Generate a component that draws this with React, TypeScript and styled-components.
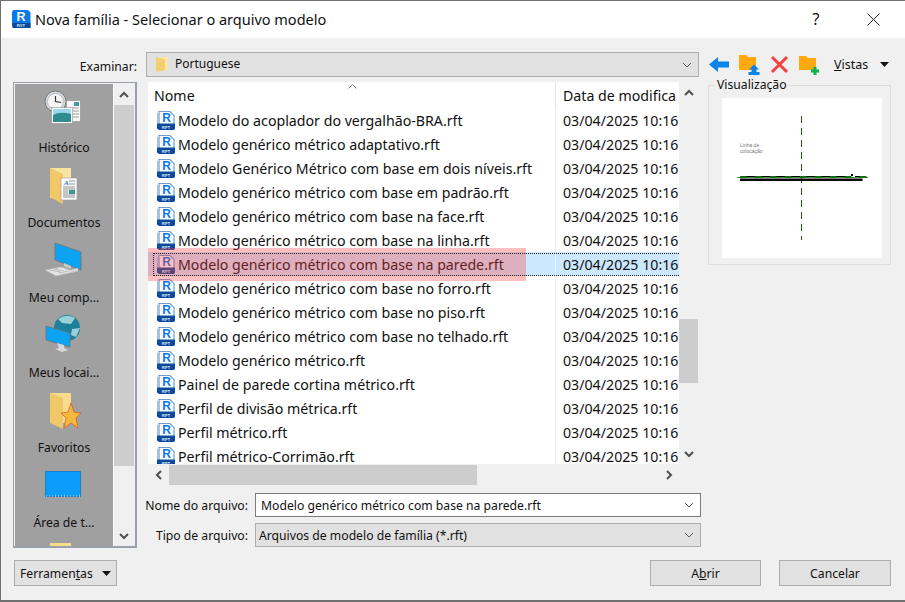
import React from "react"
import styled, { createGlobalStyle } from "styled-components"

const GlobalStyle = createGlobalStyle`
    html, body {
        margin: 0;
        padding: 0;
        background: #f0f0f0;
    }
    * {
        box-sizing: border-box;
    }
`

const files = [
    "Modelo do acoplador do vergalhão-BRA.rft",
    "Modelo genérico métrico adaptativo.rft",
    "Modelo Genérico Métrico com base em dois níveis.rft",
    "Modelo genérico métrico com base em padrão.rft",
    "Modelo genérico métrico com base na face.rft",
    "Modelo genérico métrico com base na linha.rft",
    "Modelo genérico métrico com base na parede.rft",
    "Modelo genérico métrico com base no forro.rft",
    "Modelo genérico métrico com base no piso.rft",
    "Modelo genérico métrico com base no telhado.rft",
    "Modelo genérico métrico.rft",
    "Painel de parede cortina métrico.rft",
    "Perfil de divisão métrica.rft",
    "Perfil métrico.rft",
    "Perfil métrico-Corrimão.rft"
]

const SELECTED = 6

const Window = styled.div`
    width: 905px;
    height: 602px;
    display: flex;
    flex-direction: column;
    overflow: hidden;
    background: #f0f0f0;
    border: 1px solid #707070;
    border-bottom: 2px solid #707070;
    border-right: 0;
    font-family: "Noto Sans", "Open Sans", sans-serif;
    color: #111;
`

const TitleBar = styled.div`
    height: 37px;
    flex: none;
    background: #fff;
    display: flex;
    align-items: center;
    padding-left: 10px;
    padding-bottom: 1px;
    font-size: 14.5px;
`

const TitleText = styled.span`
    margin-left: 4px;
    flex: 1;
`

const HelpMark = styled.span`
    font-size: 16px;
    width: 20px;
    text-align: center;
    margin-right: 41px;
`

const CloseMark = styled.svg`
    width: 13px;
    height: 13px;
    margin-right: 25px;
`

const Content = styled.div`
    flex: 1;
    display: flex;
    flex-direction: column;
    padding: 14px 0 0 12px;
`

const Columns = styled.div`
    display: flex;
`

const MainColumn = styled.div`
    width: 688px;
    flex: none;
`

const TopRow = styled.div`
    display: flex;
    height: 25px;
`

const LookLabel = styled.div`
    width: 124px;
    text-align: right;
    font-size: 12.2px;
    padding-top: 6px;
`

const PathCombo = styled.div`
    width: 553px;
    height: 25px;
    margin-left: 9px;
    background: #e1e1e1;
    border: 1px solid #adadad;
    display: flex;
    align-items: center;
    padding: 0 6px 0 8px;
    font-size: 12px;
`

const PathText = styled.span`
    margin-left: 6px;
    flex: 1;
    padding-bottom: 3px;
`

const Middle = styled.div`
    display: flex;
    margin-top: 5px;
`

const Sidebar = styled.div`
    width: 124px;
    height: 466px;
    flex: none;
    display: flex;
    background: #f0f0f0;
    border-style: solid;
    border-width: 1px 2px 2px 1px;
    border-color: #9aa0a8;
    padding: 1px 0 0 1px;
`

const Places = styled.div`
    width: 99px;
    background: #a0a0a0;
    overflow: hidden;
    display: flex;
    flex-direction: column;
    border-right: 1px solid #fff;
    padding-top: 3px;
`

const Place = styled.div`
    height: 75px;
    flex: none;
    display: flex;
    flex-direction: column;
    align-items: center;
    font-size: 12.2px;
`

const PlaceIcon = styled.svg`
    width: 40px;
    height: 40px;
    margin-bottom: 12px;
    flex: none;
    overflow: visible;
`

const SideScroll = styled.div`
    width: 20px;
    display: flex;
    flex-direction: column;
    align-items: center;
`

const ArrowBox = styled.div`
    height: 21px;
    width: 100%;
    flex: none;
    display: flex;
    align-items: center;
    justify-content: center;
`

const SideThumb = styled.div`
    width: 100%;
    height: 361px;
    background: #cdcdcd;
`

const SideTrack = styled.div`
    flex: 1;
`

const RightColumn = styled.div`
    flex: 1;
    display: flex;
    flex-direction: column;
`

const FileArea = styled.div`
    width: 550px;
    height: 402px;
    margin-left: 11px;
    display: grid;
    grid-template-columns: 531px 19px;
    grid-template-rows: 382px 20px;
`

const ListPanel = styled.div`
    position: relative;
    background: #fff;
    overflow: hidden;
`

const HeaderRow = styled.div`
    height: 26px;
    display: flex;
    font-size: 14.2px;
    align-items: flex-end;
`

const NameHead = styled.div`
    width: 408px;
    padding-left: 6px;
    height: 26px;
    line-height: 27px;
    border-right: 1px solid #e5e5e5;
    position: relative;
`

const SortMark = styled.svg`
    position: absolute;
    left: 200px;
    top: 2px;
    width: 9px;
    height: 5px;
`

const DateHead = styled.div`
    padding-left: 7px;
    height: 26px;
    line-height: 27px;
    white-space: nowrap;
`

const FileRow = styled.div<{ $selected: boolean }>`
    height: 24px;
    display: flex;
    align-items: center;
    font-size: 14.2px;
    background: ${(props) => (props.$selected ? "#cce8ff" : "transparent")};
`

const NameCell = styled.div`
    width: 408px;
    height: 24px;
    flex: none;
    display: flex;
    align-items: center;
    padding-left: 8px;
    border-right: 1px solid #e6f2fb;
    white-space: nowrap;
`

const FileName = styled.span`
    margin-left: 2px;
    padding-top: 1px;
`

const DateCell = styled.div`
    padding-left: 7px;
    padding-top: 1px;
    white-space: nowrap;
`

const Highlight = styled.div`
    position: absolute;
    left: 0;
    top: 166px;
    width: 378px;
    height: 33px;
    background: rgba(255, 60, 60, 0.33);
`

const FocusBox = styled.div`
    position: absolute;
    left: 5px;
    top: 171px;
    width: 540px;
    height: 23px;
    border: 1px dotted #222;
`

const VScroll = styled.div`
    display: flex;
    flex-direction: column;
    background: #f0f0f0;
`

const ScrollGap = styled.div<{ $h: number }>`
    height: ${(props) => props.$h}px;
    flex: none;
    display: flex;
    align-items: center;
    justify-content: center;
`

const VThumb = styled.div`
    height: 64px;
    flex: none;
    background: #cdcdcd;
`

const HScroll = styled.div`
    grid-column: 1 / 3;
    display: flex;
    align-items: center;
    width: 531px;
    height: 20px;
    margin-top: 1px;
`

const HArrow = styled.div`
    width: 21px;
    height: 100%;
    flex: none;
    display: flex;
    align-items: center;
    justify-content: center;
`

const HThumb = styled.div`
    width: 308px;
    height: 100%;
    background: #cdcdcd;
`

const HTrack = styled.div`
    flex: 1;
`

const Chevron = styled.svg`
    width: 10px;
    height: 10px;
    flex: none;
`

const FormRow = styled.div<{ $top: number }>`
    display: flex;
    align-items: center;
    margin-top: ${(props) => props.$top}px;
`

const FormLabel = styled.div`
    width: 111px;
    text-align: right;
    font-size: 12.2px;
    margin-right: 7px;
    white-space: nowrap;
`

const NameInput = styled.div`
    width: 446px;
    height: 24px;
    background: #fff;
    border: 1px solid #7a7a7a;
    font-size: 12.2px;
    display: flex;
    align-items: center;
    justify-content: space-between;
    padding: 0 6px 0 5px;
`

const TypeCombo = styled(NameInput)`
    background: #e1e1e1;
    border-color: #adadad;
    padding-left: 3px;
`

const Aside = styled.div`
    margin-left: 7px;
    width: 183px;
    display: flex;
    flex-direction: column;
`

const Toolbar = styled.div`
    display: flex;
    align-items: center;
    padding-left: 1px;
    height: 25px;
`

const ToolIcon = styled.svg<{ $gap: number }>`
    width: 21px;
    height: 21px;
    margin-right: ${(props) => props.$gap}px;
    flex: none;
    overflow: visible;
`

const ViewsLabel = styled.span`
    font-size: 12.5px;
    margin-left: 14px;
    width: 46px;
    flex: none;
`

const PreviewFrame = styled.div`
    position: relative;
    margin-top: 8px;
    width: 183px;
    height: 180px;
    border: 1px solid #dcdcdc;
    padding: 12px 13px;
`

const PreviewLegend = styled.span`
    position: absolute;
    left: 6px;
    top: -10px;
    background: #f0f0f0;
    padding: 0 2px;
    font-size: 12.2px;
`

const PreviewSheet = styled.svg`
    display: block;
    width: 160px;
    height: 160px;
    background: #fff;
`

const BottomRow = styled.div`
    display: flex;
    align-items: center;
    margin: 12px 0 0 1px;
`

const Button = styled.div<{ $width: number }>`
    width: ${(props) => props.$width}px;
    height: 26px;
    flex: none;
    background: #e1e1e1;
    border: 1px solid #adadad;
    font-size: 12.2px;
    display: flex;
    align-items: center;
    justify-content: center;
`

const ToolsButton = styled(Button)`
    justify-content: flex-start;
    padding-left: 5px;
    margin-right: 533px;
`

const OpenButton = styled(Button)`
    margin-right: 18px;
`

const DropMark = styled.svg`
    width: 9px;
    height: 5px;
    flex: none;
`

const ToolsDrop = styled(DropMark)`
    margin-left: 9px;
`

const RevitFileIcon: React.FC = () => (
    <svg width="20" height="21" viewBox="0 0 20 21" style={{ flex: "none" }}>
        <path d="M3 1.5 H14 L18 5.5 V18 H3 Z" fill="#fff" stroke="#6d9bd8" strokeWidth="1.2" />
        <path d="M1.7 3 V14" stroke="#a9c0dc" strokeWidth="1.4" />
        <path d="M1 13.5 H19 V18.5 L18 20 H3 L1 18.5 Z" fill="#0b4a9c" />
        <text x="10.5" y="11.5" textAnchor="middle" fontFamily="Liberation Sans" fontWeight="700" fontSize="12" fill="#0a78f0">R</text>
        <text x="10" y="18.5" textAnchor="middle" fontFamily="Liberation Sans" fontWeight="700" fontSize="4.4" fill="#dbe8fa">RFT</text>
    </svg>
)

const RevitAppIcon: React.FC = () => (
    <svg width="20" height="20" viewBox="0 0 20 20" style={{ flex: "none" }}>
        <path d="M2.5 1 H17 L19.5 3.5 V19 H3 L1 17 V2.5 Z" fill="#0a78e6" />
        <rect x="1.5" y="14" width="18" height="5" fill="#0c4a96" />
        <text x="10" y="12" textAnchor="middle" fontFamily="Liberation Sans" fontWeight="700" fontSize="12.5" fill="#fff">R</text>
        <text x="10" y="18" textAnchor="middle" fontFamily="Liberation Sans" fontWeight="700" fontSize="4.2" fill="#d5e4f8">RVT</text>
    </svg>
)

const SmallFolder: React.FC = () => (
    <svg width="14" height="17" viewBox="0 0 14 17" style={{ flex: "none" }}>
        <path d="M1 1 L10 3 V14 L1 16 Z" fill="#f2cf70" />
        <path d="M1 1 H13 V14 H10 V3 Z" fill="#fbe7a8" />
    </svg>
)

const ClockIcon: React.FC = () => (
    <PlaceIcon viewBox="0 0 40 40">
        <circle cx="11.5" cy="14.5" r="10.5" fill="#d4d8db" stroke="#73787c" />
        <circle cx="11.5" cy="14.5" r="8" fill="#f6f6f6" stroke="#b8bcc0" />
        <path d="M11.5 9 V14.5 L17 15.5" fill="none" stroke="#333" strokeWidth="1.2" />
        <rect x="22.5" y="13.5" width="14" height="21" fill="#f8f8f8" stroke="#8a8a8a" strokeWidth="0.6" />
        <rect x="30" y="15" width="5" height="4" fill="#3f9a9a" />
        <path d="M29 21 h6 M29 24 h6 M29 27 h6 M29 30 h6" stroke="#888" strokeWidth="0.8" />
        <rect x="7.5" y="20.5" width="21" height="16" fill="#fff" stroke="#8a8a8a" strokeWidth="0.6" />
        <rect x="9" y="22" width="18" height="6" fill="#9bd8f0" />
        <path d="M9 28 Q16 24 27 27 V35 H9 Z" fill="#2f8b90" />
    </PlaceIcon>
)

const DocsIcon: React.FC = () => (
    <PlaceIcon viewBox="0 0 40 40">
        <path d="M6 6 H27 V36 H6 Z" fill="#f8e3a0" />
        <path d="M6 6 L19 12 V42 L6 35 Z" fill="#f0c868" />
        <rect x="17" y="16" width="16" height="22" fill="#fbfbfb" stroke="#999" strokeWidth="0.6" />
        <text x="20" y="23" fontFamily="Liberation Serif" fontStyle="italic" fontWeight="700" fontSize="7" fill="#1e73c8">A</text>
        <path d="M25 19 h6 M25 22 h6 M19 25 h12 M19 27 h12 M19 29 h5 M19 31 h5 M19 33 h12 M19 35 h12" stroke="#666" strokeWidth="0.7" />
        <rect x="25" y="28" width="6" height="4" fill="#3d9a8a" />
    </PlaceIcon>
)

const ComputerIcon: React.FC = () => (
    <PlaceIcon viewBox="0 0 40 40">
        <path d="M11 6 L37 15 V33 L11 23 Z" fill="#0ca4f2" stroke="#6d7478" strokeWidth="0.8" />
        <path d="M20 26 L27 29 V32 L20 29 Z" fill="#c9cbcd" />
        <path d="M19 30 L26 33 L34 31 L34 34 L28 36 L19 32 Z" fill="#d5d6d8" />
        <path d="M1 33 L17 30 L30 35 L12 39 Z" fill="#e4e5e6" stroke="#b0b2b4" strokeWidth="0.6" />
        <path d="M5 33 L21 36 M9 32 L25 35 M12 31 L17 37" stroke="#aaa" strokeWidth="0.6" />
    </PlaceIcon>
)

const NetworkIcon: React.FC = () => (
    <PlaceIcon viewBox="0 0 40 40">
        <circle cx="23" cy="16" r="13" fill="#1c7f9c" />
        <path d="M14 7 Q22 1 31 6 L27 12 L18 11 Z M28 17 L36 16 L32 25 L27 23 Z" fill="#9ad0d8" />
        <path d="M2 14 L26 21 V35 L2 28 Z" fill="#0ca4f2" stroke="#6d7478" strokeWidth="0.8" />
        <path d="M13 31 L20 33 V36 L24 38 L18 40 L11 37 L15 36 Z" fill="#d6d8da" />
    </PlaceIcon>
)

const StarFolderIcon: React.FC = () => (
    <PlaceIcon viewBox="0 0 40 40">
        <path d="M6 6 H27 V36 H6 Z" fill="#f8dc8c" />
        <path d="M6 6 L19 11 V42 L6 36 Z" fill="#f0c868" />
        <path d="M27 16 L30 25 L37 26 L32 31 L34 41 L27 36 L20 41 L22 31 L17 26 L24 25 Z" fill="#f4b93c" stroke="#d9542a" strokeWidth="0.7" />
    </PlaceIcon>
)

const DesktopIcon: React.FC = () => (
    <PlaceIcon viewBox="0 0 40 40">
        <rect x="1.5" y="9.5" width="35" height="25" fill="#0a9cf8" stroke="#1c7fc4" />
        <path d="M2 34 H36" stroke="#d8eefc" strokeDasharray="1 2" />
    </PlaceIcon>
)

const FolderStubIcon: React.FC = () => (
    <PlaceIcon viewBox="0 0 40 40">
        <rect x="6" y="6" width="21" height="34" fill="#f8dc8c" />
    </PlaceIcon>
)

const places = [
    { key: "history", label: "Histórico", icon: <ClockIcon /> },
    { key: "docs", label: "Documentos", icon: <DocsIcon /> },
    { key: "computer", label: "Meu comp...", icon: <ComputerIcon /> },
    { key: "network", label: "Meus locai...", icon: <NetworkIcon /> },
    { key: "favorites", label: "Favoritos", icon: <StarFolderIcon /> },
    { key: "desktop", label: "Área de t...", icon: <DesktopIcon /> },
    { key: "stub", label: "", icon: <FolderStubIcon /> }
]

const ThickUp: React.FC = () => (
    <Chevron viewBox="0 0 10 10">
        <path d="M1 7 L5 3 L9 7" fill="none" stroke="#505050" strokeWidth="2" />
    </Chevron>
)

const ThickDown: React.FC = () => (
    <Chevron viewBox="0 0 10 10">
        <path d="M1 3 L5 7 L9 3" fill="none" stroke="#505050" strokeWidth="2" />
    </Chevron>
)

const ThinDown: React.FC = () => (
    <Chevron viewBox="0 0 10 10">
        <path d="M1 3 L5 7 L9 3" fill="none" stroke="#606060" strokeWidth="1" />
    </Chevron>
)

export default function App() {
    return (
        <Window>
            <GlobalStyle />
            <TitleBar>
                <RevitAppIcon />
                <TitleText>Nova família - Selecionar o arquivo modelo</TitleText>
                <HelpMark>?</HelpMark>
                <CloseMark viewBox="0 0 13 13">
                    <path d="M0.5 0.5 L12.5 12.5 M12.5 0.5 L0.5 12.5" stroke="#222" strokeWidth="1" />
                </CloseMark>
            </TitleBar>
            <Content>
                <Columns>
                    <MainColumn>
                        <TopRow>
                            <LookLabel>Examinar:</LookLabel>
                            <PathCombo>
                                <SmallFolder />
                                <PathText>Portuguese</PathText>
                                <ThinDown />
                            </PathCombo>
                        </TopRow>
                        <Middle>
                            <Sidebar>
                                <Places>
                                    {places.map((place) => (
                                        <Place key={place.key}>
                                            {place.icon}
                                            {place.label}
                                        </Place>
                                    ))}
                                </Places>
                                <SideScroll>
                                    <ArrowBox>
                                        <ThickUp />
                                    </ArrowBox>
                                    <SideThumb />
                                    <SideTrack />
                                    <ArrowBox>
                                        <ThickDown />
                                    </ArrowBox>
                                </SideScroll>
                            </Sidebar>
                            <RightColumn>
                                <FileArea>
                                    <ListPanel>
                                        <HeaderRow>
                                            <NameHead>
                                                Nome
                                                <SortMark viewBox="0 0 9 5">
                                                    <path d="M0.5 4.5 L4.5 0.5 L8.5 4.5" fill="none" stroke="#888" />
                                                </SortMark>
                                            </NameHead>
                                            <DateHead>Data de modifica</DateHead>
                                        </HeaderRow>
                                        {files.map((name, index) => (
                                            <FileRow key={name} $selected={index === SELECTED}>
                                                <NameCell>
                                                    <RevitFileIcon />
                                                    <FileName>{name}</FileName>
                                                </NameCell>
                                                <DateCell>03/04/2025 10:16</DateCell>
                                            </FileRow>
                                        ))}
                                        <Highlight />
                                        <FocusBox />
                                    </ListPanel>
                                    <VScroll>
                                        <ScrollGap $h={21}>
                                            <ThickUp />
                                        </ScrollGap>
                                        <ScrollGap $h={216} />
                                        <VThumb />
                                        <ScrollGap $h={60} />
                                        <ScrollGap $h={21}>
                                            <ThickDown />
                                        </ScrollGap>
                                    </VScroll>
                                    <HScroll>
                                        <HArrow>
                                            <Chevron viewBox="0 0 10 10">
                                                <path d="M7 1 L3 5 L7 9" fill="none" stroke="#505050" strokeWidth="2" />
                                            </Chevron>
                                        </HArrow>
                                        <HThumb />
                                        <HTrack />
                                        <HArrow>
                                            <Chevron viewBox="0 0 10 10">
                                                <path d="M3 1 L7 5 L3 9" fill="none" stroke="#505050" strokeWidth="2" />
                                            </Chevron>
                                        </HArrow>
                                    </HScroll>
                                </FileArea>
                                <FormRow $top={9}>
                                    <FormLabel>Nome do arquivo:</FormLabel>
                                    <NameInput>
                                        Modelo genérico métrico com base na parede.rft
                                        <ThinDown />
                                    </NameInput>
                                </FormRow>
                                <FormRow $top={6}>
                                    <FormLabel>Tipo de arquivo:</FormLabel>
                                    <TypeCombo>
                                        Arquivos de modelo de família (*.rft)
                                        <ThinDown />
                                    </TypeCombo>
                                </FormRow>
                            </RightColumn>
                        </Middle>
                    </MainColumn>
                    <Aside>
                        <Toolbar>
                            <ToolIcon $gap={9} viewBox="0 0 21 21">
                                <path d="M0 10.5 L9 3 V7.5 H20 V13.5 H9 V18 Z" fill="#0a84e8" />
                            </ToolIcon>
                            <ToolIcon $gap={9} viewBox="0 0 21 21">
                                <path d="M0 1 H7 L9 3 H17 V16 H0 Z" fill="#ffa90f" />
                                <path d="M15 10.5 L20 15.5 H17.5 V18 H20.5 V21 H9.5 V18 H12.5 V15.5 H10 Z" fill="#0a84e8" />
                            </ToolIcon>
                            <ToolIcon $gap={9} viewBox="0 0 21 21">
                                <path d="M3 3 L18 18 M18 3 L3 18" stroke="#f44040" strokeWidth="3" />
                            </ToolIcon>
                            <ToolIcon $gap={0} viewBox="0 0 21 21">
                                <path d="M0 2 H7 L9 4 H17 V16 H0 Z" fill="#ffa90f" />
                                <path d="M16 13 V21 M12 17 H20" stroke="#0cb24c" strokeWidth="3" />
                            </ToolIcon>
                            <ViewsLabel>
                                <u>V</u>istas
                            </ViewsLabel>
                            <DropMark viewBox="0 0 9 5">
                                <path d="M0 0 H9 L4.5 5 Z" fill="#111" />
                            </DropMark>
                        </Toolbar>
                        <PreviewFrame>
                            <PreviewLegend>Visualização</PreviewLegend>
                            <PreviewSheet viewBox="0 0 160 160">
                                <path d="M79.5 18 V142" stroke="#0f5f0f" strokeWidth="1" strokeDasharray="7 5" />
                                <rect x="18" y="80.5" width="122.5" height="2.5" fill="#000" />
                                <path d="M18 78.5 H128 M133 78.5 H140.5" stroke="#000" strokeWidth="1" />
                                <path d="M15 79.5 H146" stroke="#107010" strokeWidth="0.8" />
                                <path d="M18 79 H146" stroke="#107010" strokeWidth="2" strokeDasharray="6.5 8.5" />
                                <rect x="129" y="76" width="2" height="2" fill="#000" />
                                <text x="18" y="49" fontFamily="Liberation Sans" fontSize="5" fill="#777">Linha de</text>
                                <text x="18" y="55" fontFamily="Liberation Sans" fontSize="5" fill="#777">colocação</text>
                            </PreviewSheet>
                        </PreviewFrame>
                    </Aside>
                </Columns>
                <BottomRow>
                    <ToolsButton $width={103}>
                        <span>
                            Ferramen<u>t</u>as
                        </span>
                        <ToolsDrop viewBox="0 0 9 5">
                            <path d="M0 0 H9 L4.5 5 Z" fill="#111" />
                        </ToolsDrop>
                    </ToolsButton>
                    <OpenButton $width={111}>
                        <span>
                            A<u>b</u>rir
                        </span>
                    </OpenButton>
                    <Button $width={112}>Cancelar</Button>
                </BottomRow>
            </Content>
        </Window>
    )
}
